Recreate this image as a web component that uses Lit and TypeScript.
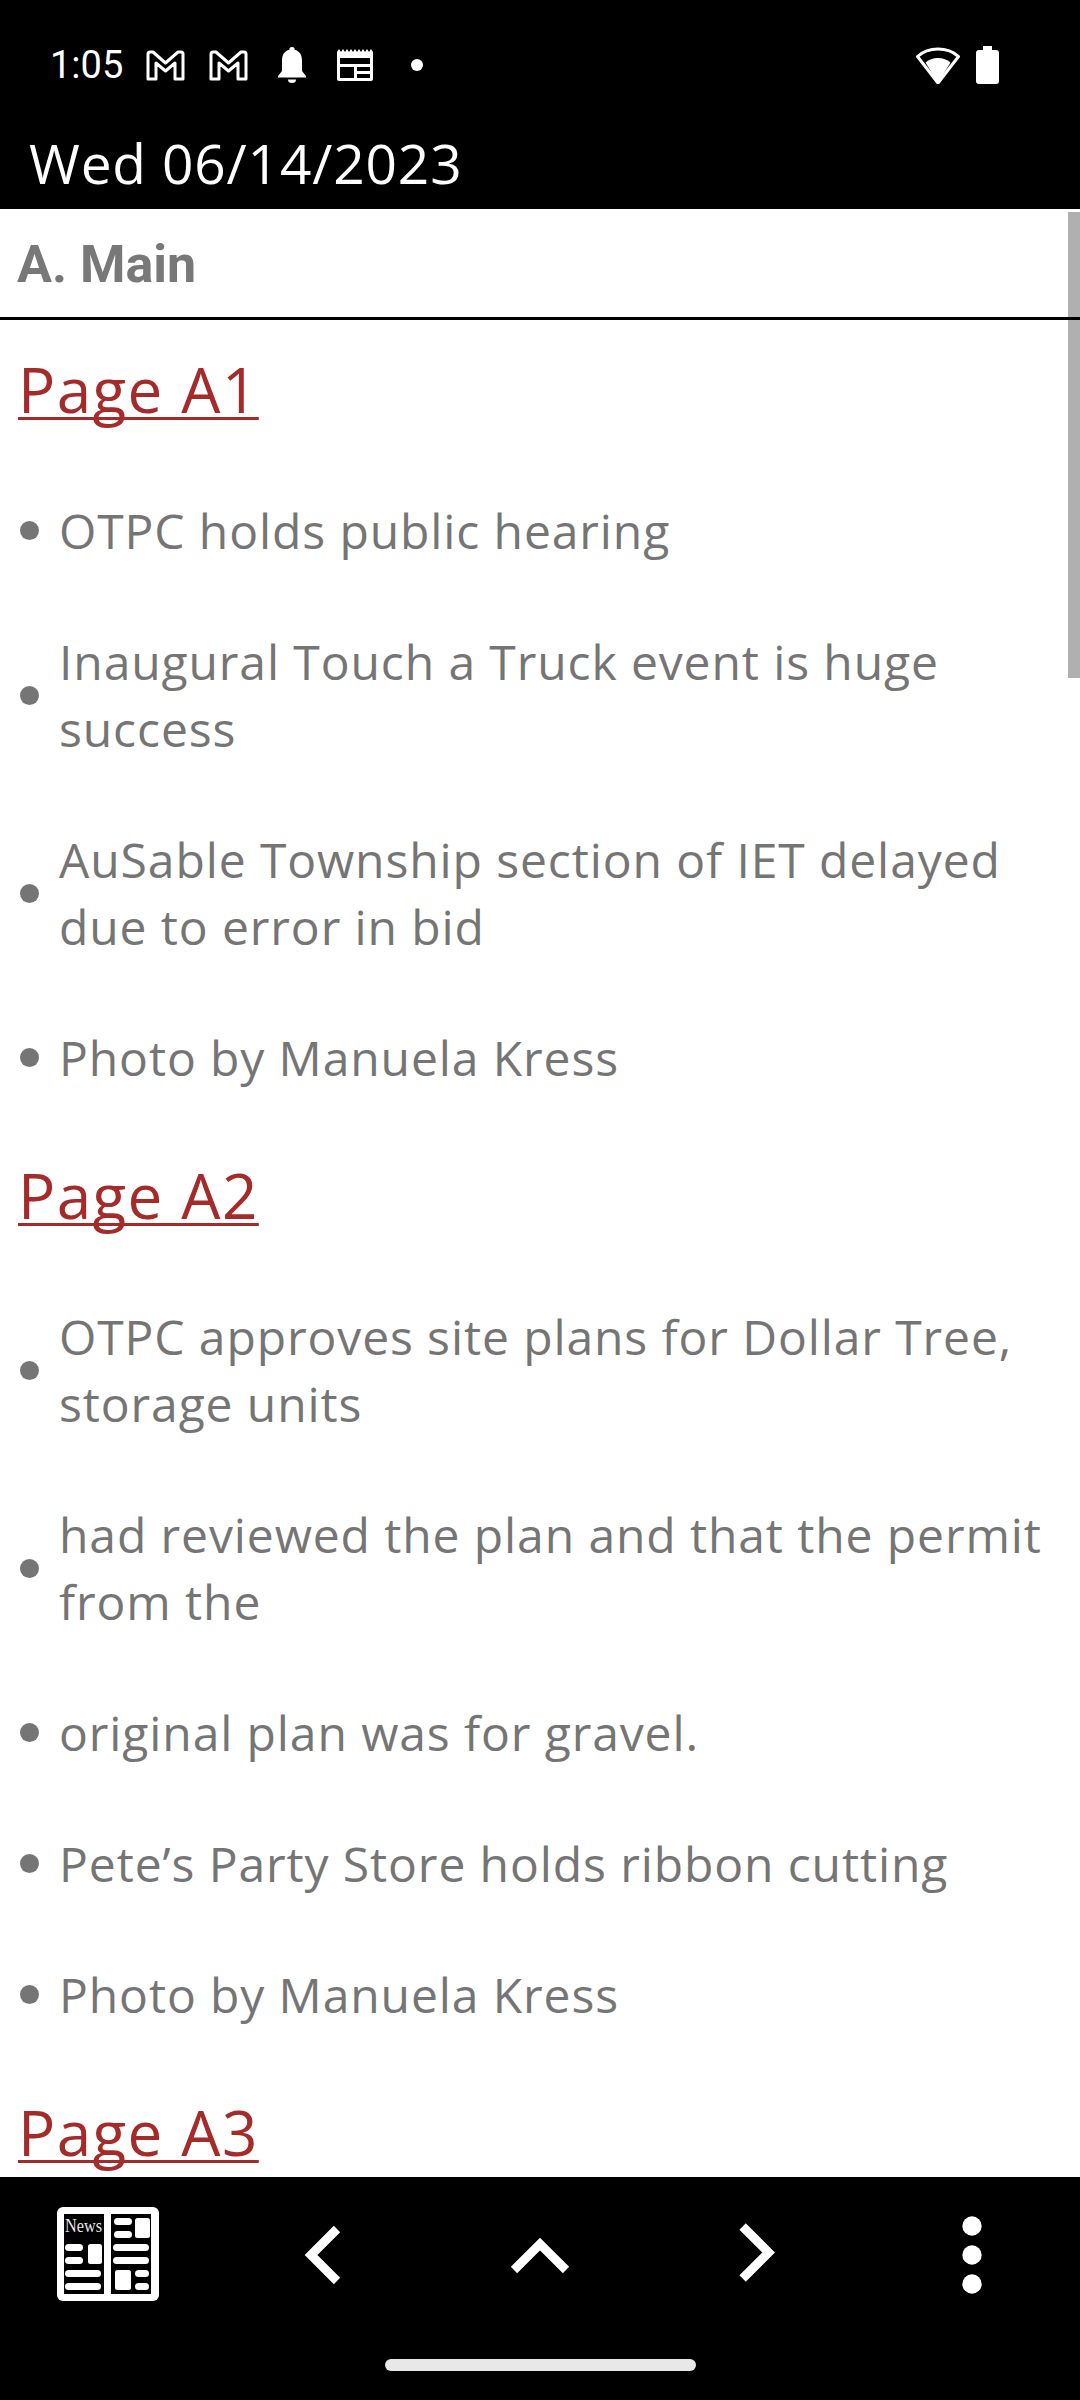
import { LitElement, html, css } from "lit";
import { customElement } from "lit/decorators.js";

const sections = [
  { title: "Page A1", items: ["OTPC holds public hearing", "Inaugural Touch a Truck event is huge success", "AuSable Township section of IET delayed due to error in bid", "Photo by Manuela Kress"] },
  { title: "Page A2", items: ["OTPC approves site plans for Dollar Tree, storage units", "had reviewed the plan and that the permit from the", "original plan was for gravel.", "Pete’s Party Store holds ribbon cutting", "Photo by Manuela Kress"] },
  { title: "Page A3", items: [] as string[] },
];

const gmail = html`<svg class="gm" viewBox="0 0 39 31"><path d="M2 4Q2 2 4 2H7L19.5 13 32 2H35Q37 2 37 4V29H29V13L19.5 21 10 13V29H2Z" fill="none" stroke="#fff" stroke-width="3" stroke-linejoin="round"/></svg>`;

@customElement("app-root")
export class AppRoot extends LitElement {
  static styles = css`
    :host { display: block; width: 1080px; height: 2400px; background: #fff; overflow: hidden; }
    .page { position: relative; display: flex; flex-direction: column; height: 2400px; }
    .top { background: #000; color: #fff; height: 209px; flex: none; box-sizing: border-box; }
    .status { display: flex; align-items: center; height: 46px; padding: 42px 81px 0 50px; }
    .time { font: 400 38px/46px Roboto, sans-serif; width: 96px; }
    .gm { width: 39px; height: 31px; margin-right: 24px; flex: none; }
    .bell { width: 30px; height: 36px; margin: 0 30px 0 5px; flex: none; }
    .cal { width: 36px; height: 32px; flex: none; }
    .dot { width: 12px; height: 12px; border-radius: 50%; background: #fff; margin-left: 38px; flex: none; }
    .spacer { flex: 1; }
    .wifi { width: 44px; height: 37px; margin-right: 16px; flex: none; }
    .batt { width: 23px; height: 38px; flex: none; }
    .date { font: 400 55px/70px "Open Sans", sans-serif; padding-left: 29px; margin-top: 40px; letter-spacing: 0.850px; }
    .head { position: relative; z-index: 1; flex: none; height: 111px; box-sizing: border-box; border-bottom: 3px solid #000; padding: 3px 17px 0; display: flex; align-items: center; font: 700 52px Roboto, sans-serif; color: #787878; }
    .content { flex: 1; overflow: hidden; padding: 35px 18px 0; min-height: 0; }
    h2 { margin: 0; font: 400 62px/68px "Open Sans", sans-serif; letter-spacing: 1.400px; color: #a52a2a; text-decoration: underline; text-decoration-thickness: 3px; text-underline-offset: 4px; text-decoration-skip-ink: none; }
    ul { list-style: none; margin: 0; padding: 74px 0 70px; display: flex; flex-direction: column; gap: 64px; }
    li { display: flex; align-items: center; gap: 20px; font: 400 48px/67px "Open Sans", sans-serif; letter-spacing: 0.900px; color: #757575; }
    .bullet { width: 19px; height: 19px; border-radius: 50%; background: #757575; flex: none; margin-left: 2px; }
    .thumb { position: absolute; right: 0; top: 212px; width: 12px; height: 466px; background: #b0b0b0; }
    .nav { flex: none; height: 223px; background: #000; display: flex; flex-direction: column; align-items: center; }
    .icons { display: grid; grid-template-columns: repeat(5, 216px); width: 1080px; height: 182px; justify-items: center; }
    .icons svg { display: block; }
    .news { margin-top: 30px; }
    .pill { width: 311px; height: 12px; border-radius: 6px; background: #e8e8e8; }
  `;

  render() {
    return html`<div class="page">
      <div class="top">
        <div class="status">
          <span class="time">1:05</span>
          ${gmail}${gmail}
          <svg class="bell" viewBox="0 0 30 36"><path d="M15 0a2.6 2.6 0 0 1 2.6 2.8C22.800 4 25 8.300 25 13.500V24l4 5v1.500H1V29l4-5V13.500C5 8.300 7.200 4 12.400 2.800A2.600 2.600 0 0 1 15 0ZM11 32.500h8a4 3.500 0 0 1-8 0Z" fill="#fff"/></svg>
          <svg class="cal" viewBox="0 0 36 32"><path d="M0 3 2 0 4 3 6 0 8 3 10 0 12 3 14 0 16 3 18 0 20 3 22 0 24 3 26 0 28 3 30 0 32 3 34 0 36 3V30a2 2 0 0 1-2 2H2a2 2 0 0 1-2-2Z" fill="#fff"/><path d="M3 9H33V15H3ZM3 18H17V29H3ZM20 18H33V22H20ZM20 25H33V29H20Z" fill="#000"/></svg>
          <span class="dot"></span>
          <span class="spacer"></span>
          <svg class="wifi" viewBox="0 0 44 37"><path d="M22 2C14 2 7 4.500 1.500 9.500L22 36 42.500 9.500C37 4.500 30 2 22 2Z" fill="none" stroke="#fff" stroke-width="3" stroke-linejoin="round"/><path d="M9.500 15.500C13 12.500 17 11 22 11S31 12.500 34.500 15.500L22 36Z" fill="#fff"/></svg>
          <svg class="batt" viewBox="0 0 23 38"><path d="M7 0H16V4H20a3 3 0 0 1 3 3V35a3 3 0 0 1-3 3H3a3 3 0 0 1-3-3V7a3 3 0 0 1 3-3H7Z" fill="#fff"/></svg>
        </div>
        <div class="date">Wed 06/14/2023</div>
      </div>
      <div class="thumb"></div>
      <div class="head">A. Main</div>
      <div class="content">
        ${sections.map((s) => html`<h2>${s.title}</h2>${s.items.length ? html`<ul>${s.items.map((t) => html`<li><span class="bullet"></span><span>${t}</span></li>`)}</ul>` : ""}`)}
      </div>
      <div class="nav">
        <div class="icons">
          <svg class="news" width="102" height="94" viewBox="0 0 102 94">
            <rect width="102" height="94" rx="6" fill="#fff"/>
            <rect x="7" y="7" width="40" height="80" fill="#000"/><rect x="54" y="7" width="40" height="80" fill="#000"/>
            <text x="8" y="25" font-family="Liberation Serif" font-size="19" fill="#e8e8e8" textLength="37" lengthAdjust="spacingAndGlyphs">News</text>
            <g fill="#fff">
              <rect x="8" y="37" width="18" height="7" rx="3.500"/><rect x="8" y="50" width="18" height="7" rx="3.500"/><rect x="31" y="37" width="14" height="20" rx="2.500"/>
              <rect x="8" y="63" width="36" height="7" rx="3.500"/><rect x="8" y="76" width="36" height="7" rx="3.500"/>
              <rect x="57" y="11" width="18" height="7" rx="3.500"/><rect x="57" y="24" width="18" height="7" rx="3.500"/><rect x="78" y="11" width="15" height="20" rx="2.500"/>
              <rect x="56" y="37" width="36" height="7" rx="3.500"/><rect x="56" y="50" width="36" height="7" rx="3.500"/>
              <rect x="58" y="63" width="16" height="20" rx="2.500"/><rect x="78" y="63" width="14" height="7" rx="3.500"/><rect x="78" y="76" width="14" height="7" rx="3.500"/>
            </g>
          </svg>
          <svg width="216" height="182" viewBox="0 0 216 182"><path d="M121 52 95 78 121 104" fill="none" stroke="#fff" stroke-width="9"/></svg>
          <svg width="216" height="182" viewBox="0 0 216 182"><path d="M82 93 108 67 134 93" fill="none" stroke="#fff" stroke-width="9"/></svg>
          <svg width="216" height="182" viewBox="0 0 216 182"><path d="M94.600 49.500 120.600 75.500 94.600 101.500" fill="none" stroke="#fff" stroke-width="9"/></svg>
          <svg width="216" height="182" viewBox="0 0 216 182"><g fill="#fff"><circle cx="108" cy="49" r="9.700"/><circle cx="108" cy="78" r="9.700"/><circle cx="108" cy="107" r="9.700"/></g></svg>
        </div>
        <div class="pill"></div>
      </div>
    </div>`;
  }
}
